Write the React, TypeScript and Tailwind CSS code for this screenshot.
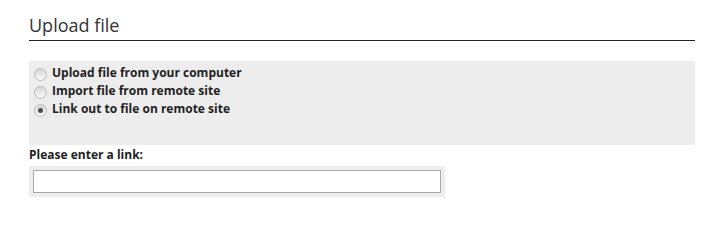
import { useState } from "react";

const options = [
  { id: "upload", label: "Upload file from your computer" },
  { id: "import", label: "Import file from remote site" },
  { id: "link", label: "Link out to file on remote site" },
];

const Radio = ({ checked }: { checked: boolean }) => (
  <span className="relative inline-flex h-[13px] w-[13px] shrink-0 items-center justify-center rounded-full border border-[#bcbcbc] bg-gradient-to-b from-[#d6d6d6] to-[#fafafa]">
    {checked && <span className="h-[5px] w-[5px] rounded-full bg-[#4a4a4a]" />}
  </span>
);

const App = () => {
  const [mode, setMode] = useState("link");
  const [link, setLink] = useState("");

  return (
    <div className="min-h-screen bg-white font-['Open_Sans',sans-serif] text-[#222]">
      <div className="w-[695px] pl-[29px] pt-[13px]">
        {/* Heading */}
        <h2 className="border-b border-[#222] pb-[3px] text-[18px] font-normal leading-[24px] text-[#333]">
          Upload file
        </h2>

        {/* Source options */}
        <div className="mt-[20px] h-[84px] bg-[#ededed] pl-[5px] pt-[4px]">
          {options.map((o) => (
            <label
              key={o.id}
              className="flex h-[18px] cursor-pointer items-center gap-[5px] text-[12px] font-bold"
              onClick={() => setMode(o.id)}
            >
              <Radio checked={mode === o.id} />
              <span className="-mt-[2px]">{o.label}</span>
            </label>
          ))}
        </div>

        {/* Link field */}
        <div className="mt-[2px] text-[12px] font-bold leading-[16px]">Please enter a link:</div>
        <div className="mt-[3px] w-[416px] bg-[#ededed] p-[4px]">
          <input
            type="text"
            value={link}
            onChange={(e) => setLink(e.target.value)}
            className="block h-[23px] w-full border border-[#a9a9a9] bg-white px-1 text-[12px] outline-none"
          />
        </div>
      </div>
    </div>
  );
};

export default App;
